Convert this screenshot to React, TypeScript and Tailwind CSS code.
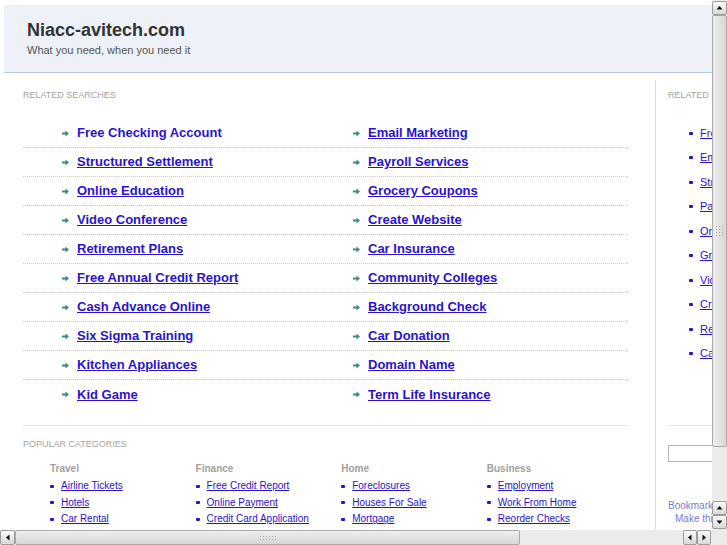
import React from 'react';

const leftLinks = [
  'Free Checking Account',
  'Structured Settlement',
  'Online Education',
  'Video Conference',
  'Retirement Plans',
  'Free Annual Credit Report',
  'Cash Advance Online',
  'Six Sigma Training',
  'Kitchen Appliances',
  'Kid Game',
];

const rightLinks = [
  'Email Marketing',
  'Payroll Services',
  'Grocery Coupons',
  'Create Website',
  'Car Insurance',
  'Community Colleges',
  'Background Check',
  'Car Donation',
  'Domain Name',
  'Term Life Insurance',
];

const sideLinks = [
  'Free Checking Account',
  'Email Marketing',
  'Structured Settlement',
  'Payroll Services',
  'Online Education',
  'Grocery Coupons',
  'Video Conference',
  'Create Website',
  'Retirement Plans',
  'Car Insurance',
];

const categories = [
  { title: 'Travel', links: ['Airline Tickets', 'Hotels', 'Car Rental'] },
  { title: 'Finance', links: ['Free Credit Report', 'Online Payment', 'Credit Card Application'] },
  { title: 'Home', links: ['Foreclosures', 'Houses For Sale', 'Mortgage'] },
  { title: 'Business', links: ['Employment', 'Work From Home', 'Reorder Checks'] },
];

function Arrow() {
  return (
    <svg width="7" height="7" viewBox="0 0 7 7" className="shrink-0">
      <path d="M0 2.6h3.4V0.6L7 3.5 3.4 6.4V4.4H0z" fill="#3f8a84" />
    </svg>
  );
}

function SearchItem({ text, plain }: { text: string; plain?: boolean }) {
  return (
    <div className="flex w-[291px] shrink-0 items-center gap-[8px]">
      <Arrow />
      <a
        href="#"
        className={`text-[13px] font-bold leading-[16px] text-[#2b12cf] ${plain ? 'no-underline' : 'underline'}`}
      >
        {text}
      </a>
    </div>
  );
}

function Tri({ dir }: { dir: 'up' | 'down' | 'left' | 'right' }) {
  const d = {
    up: 'M0.5 4.5L3.5 1 6.5 4.5z',
    down: 'M0.5 1.5L3.5 5 6.5 1.5z',
    left: 'M4.5 0.5L1 3.5 4.5 6.5z',
    right: 'M1.5 0.5L5 3.5 1.5 6.5z',
  }[dir];
  const w = dir === 'up' || dir === 'down' ? 7 : 6;
  const h = dir === 'up' || dir === 'down' ? 6 : 7;
  return (
    <svg width={w} height={h} viewBox={`0 0 ${w} ${h}`}>
      <path d={d} fill="#111" />
    </svg>
  );
}

function ScrollBtn({ dir, className }: { dir: 'up' | 'down' | 'left' | 'right'; className: string }) {
  return (
    <div
      className={`flex shrink-0 items-center justify-center rounded-[2px] border border-[#9c9c9c] bg-gradient-to-b from-[#fafafa] to-[#d9d9d9] ${className}`}
    >
      <Tri dir={dir} />
    </div>
  );
}

function Grip({ vertical }: { vertical?: boolean }) {
  const dots = Array.from({ length: 12 });
  return (
    <div className={`grid gap-[2px] ${vertical ? 'grid-cols-3' : 'grid-cols-6'}`}>
      {dots.map((_, i) => (
        <span key={i} className="h-[1px] w-[1px] bg-[#a6a6a6]" />
      ))}
    </div>
  );
}

export default function App() {
  return (
    <div className="flex h-[545px] w-[727px] flex-col overflow-hidden bg-white font-['Liberation_Sans',Arial,sans-serif]">
      <div className="flex h-[530px]">
        {/* page viewport */}
        <div className="w-[712px] overflow-hidden">
          <div className="w-[942px] pl-[4px] pt-[5px]">
            {/* header */}
            <div className="h-[68px] border-b border-[#b3c5ec] bg-[#eef1f8] pl-[23px] pt-[14px]">
              <h1 className="text-[18px] font-bold leading-[22px] text-[#333]">Niacc-avitech.com</h1>
              <p className="mt-[2px] text-[11px] leading-[14px] text-[#555]">What you need, when you need it</p>
            </div>

            <div className="flex">
              {/* main column */}
              <div className="w-[651px] shrink-0 pl-[19px] pr-[27px]">
                <div className="mt-[16px] text-[9px] leading-[12px] text-[#a3a3a3]">RELATED SEARCHES</div>

                <div className="mt-[18px]">
                  {leftLinks.map((l, i) => (
                    <div
                      key={l}
                      className="flex h-[29px] items-center border-b border-dotted border-[#b6c7ee] pl-[39px] last:border-b-0"
                    >
                      <SearchItem text={l} plain={i === 0} />
                      <SearchItem text={rightLinks[i]} />
                    </div>
                  ))}
                </div>

                <div className="mt-[16px] border-t border-[#e3e4f2]" />

                <div className="mt-[12px] text-[9px] leading-[12px] text-[#a3a3a3]">POPULAR CATEGORIES</div>

                <div className="mt-[12px] flex pl-[27px]">
                  {categories.map((c) => (
                    <div key={c.title} className="w-[145.6px] shrink-0">
                      <div className="text-[10px] font-bold leading-[13px] text-[#a0a0a0]">{c.title}</div>
                      <ul className="mt-[3px]">
                        {c.links.map((l) => (
                          <li key={l} className="flex h-[16.5px] items-center gap-[7px]">
                            <span className="h-[3px] w-[4px] shrink-0 rounded-[1px] bg-[#2b12cf]" />
                            <a href="#" className="text-[10px] leading-[12px] text-[#2b12cf] underline">
                              {l}
                            </a>
                          </li>
                        ))}
                      </ul>
                    </div>
                  ))}
                </div>
              </div>

              {/* sidebar */}
              <div className="mt-[7px] min-h-[470px] w-[287px] shrink-0 border-l border-[#dcdcf0] pl-[12px] pr-[27px]">
                <div className="mt-[9px] text-[9px] leading-[12px] text-[#a3a3a3]">RELATED SEARCHES</div>
                <ul className="mt-[19.75px] pl-[21px]">
                  {sideLinks.map((l) => (
                    <li key={l} className="flex h-[24.5px] items-center gap-[7px]">
                      <span className="h-[3px] w-[4px] shrink-0 rounded-[1px] bg-[#2b12cf]" />
                      <a href="#" className="text-[11px] leading-[13px] text-[#2b12cf] underline">
                        {l}
                      </a>
                    </li>
                  ))}
                </ul>
                <div className="mt-[59px] border-t border-[#e3e4f2]" />
                <input
                  type="text"
                  className="mt-[19px] block h-[17px] w-[150px] border border-[#b5b5b5] bg-white"
                />
                <div className="mt-[37px] text-[10px] leading-[13px] text-[#7c7cd2]">Bookmark this page</div>
                <div className="pl-[7px] text-[10px] leading-[13px] text-[#7c7cd2]">Make this your homepage</div>
              </div>
            </div>
          </div>
        </div>

        {/* vertical scrollbar */}
        <div className="flex w-[15px] flex-col bg-[#ebebeb]">
          <ScrollBtn dir="up" className="mt-[1px] h-[14px] w-[15px]" />
          <div className="flex h-[432px] items-center justify-center rounded-[2px] border border-[#a9a9a9] bg-gradient-to-r from-[#efefef] to-[#d6d6d6]">
            <Grip vertical />
          </div>
          <div className="flex-1" />
          <ScrollBtn dir="up" className="h-[14px] w-[15px]" />
          <ScrollBtn dir="down" className="mb-[1px] h-[14px] w-[15px]" />
        </div>
      </div>

      {/* horizontal scrollbar */}
      <div className="flex h-[15px] bg-[#ebebeb]">
        <ScrollBtn dir="left" className="h-[15px] w-[15px]" />
        <div className="flex w-[505px] items-center justify-center rounded-[2px] border border-[#a9a9a9] bg-gradient-to-b from-[#efefef] to-[#d6d6d6]">
          <Grip />
        </div>
        <div className="flex-1" />
        <ScrollBtn dir="left" className="h-[15px] w-[14px]" />
        <ScrollBtn dir="right" className="h-[15px] w-[14px]" />
        <div className="w-[16px] bg-[#ebebeb]" />
      </div>
    </div>
  );
}
